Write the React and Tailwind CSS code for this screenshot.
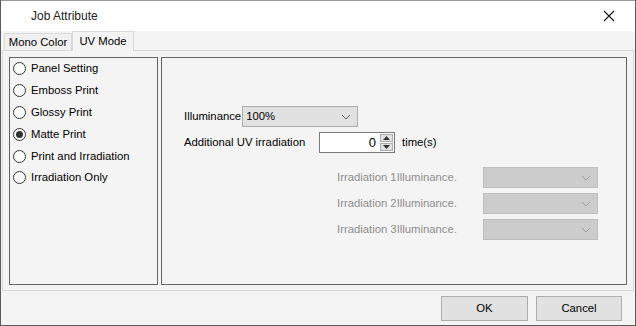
import React from 'react';

const font = { fontFamily: '"Liberation Sans", "Noto Sans CJK JP", sans-serif' };

function Radio({ label, checked }) {
  return (
    <div className="flex h-[21.8px] items-center gap-[5px] pl-[3px]">
      <span className="flex h-[13px] w-[13px] items-center justify-center rounded-full border border-[#333] bg-white">
        {checked && <span className="h-[7px] w-[7px] rounded-full bg-[#333]" />}
      </span>
      <span>{label}</span>
    </div>
  );
}

function Chevron({ color }) {
  return (
    <svg width="10" height="6" viewBox="0 0 10 6">
      <path d="M1 1 L5 5 L9 1" fill="none" stroke={color} strokeWidth="1" />
    </svg>
  );
}

function Combo({ value, disabled, className }) {
  return (
    <div
      className={`flex h-[21px] items-center justify-between border pl-[3px] pr-[6px] ${
        disabled ? 'border-[#bfbfbf] bg-[#cccccc]' : 'border-[#adadad] bg-[#e1e1e1]'
      } ${className}`}
    >
      <span>{value}</span>
      <Chevron color={disabled ? '#a0a0a0' : '#606060'} />
    </div>
  );
}

export default function App() {
  const radios = ['Panel Setting', 'Emboss Print', 'Glossy Print', 'Matte Print', 'Print and Irradiation', 'Irradiation Only'];
  return (
    <div style={font} className="flex h-[326px] w-[636px] flex-col border border-t-0 border-[#5a5a5a] bg-[#f4f4f4] text-[11.3px] text-black">
      <div className="flex h-[31px] items-center justify-between border-t border-[#9a9a9a] bg-white pl-[30px] pr-[20px]">
        <span className="text-[12px] text-[#222]">Job Attribute</span>
        <svg width="12" height="12" viewBox="0 0 12 12">
          <path d="M1 1 L11 11 M11 1 L1 11" stroke="#111" strokeWidth="1.1" />
        </svg>
      </div>
      <div className="flex h-[19px] items-end pl-[3px]">
        <div className="flex h-[17px] w-[68px] items-center justify-center border border-b-0 border-[#d9d9d9] bg-[#f0f0f0]">Mono Color</div>
        <div className="relative top-[1px] flex h-[20px] w-[62px] items-center justify-center border border-b-0 border-[#d9d9d9] bg-[#f4f4f4]">UV Mode</div>
      </div>
      <div className="mx-[1px] flex h-[241px] gap-[3px] border border-[#d9d9d9] px-[6px] pt-[6px] pb-[5px]">
        <div className="flex w-[149px] flex-col border border-[#646464]">
          {radios.map((r) => (
            <Radio key={r} label={r} checked={r === 'Matte Print'} />
          ))}
        </div>
        <div className="flex flex-1 flex-col border border-[#646464] pl-[22px] pt-[48px]">
          <div className="flex items-center gap-[1px]">
            <span>Illuminance</span>
            <Combo value="100%" className="w-[116px]" />
          </div>
          <div className="mt-[5px] flex items-center">
            <span className="w-[135px]">Additional UV irradiation</span>
            <div className="flex h-[21px] w-[76px] items-center border border-[#7a7a7a] bg-white">
              <span className="flex-1 pr-[3px] text-right text-[13px]">0</span>
              <div className="flex h-full w-[15px] flex-col gap-[1px] p-[1px]">
                <div className="flex flex-1 items-center justify-center border border-[#adadad] bg-[#e1e1e1]">
                  <svg width="7" height="4" viewBox="0 0 7 4"><path d="M0 4 L3.5 0 L7 4Z" fill="#333" /></svg>
                </div>
                <div className="flex flex-1 items-center justify-center border border-[#adadad] bg-[#e1e1e1]">
                  <svg width="7" height="4" viewBox="0 0 7 4"><path d="M0 0 L3.5 4 L7 0Z" fill="#333" /></svg>
                </div>
              </div>
            </div>
            <span className="ml-[7px]">time(s)</span>
          </div>
          <div className="mt-[14px] flex flex-col gap-[5px] pl-[153px] text-[#8d8d8d]">
            {[1, 2, 3].map((n) => (
              <div key={n} className="flex items-center">
                <span className="w-[146px]">{`Irradiation ${n}Illuminance.`}</span>
                <Combo value="" disabled className="w-[115px]" />
              </div>
            ))}
          </div>
        </div>
      </div>
      <div className="flex flex-1 items-center justify-end gap-[8px] pr-[13px] pt-[1px]">
        <button className="h-[25px] w-[87px] border border-[#adadad] bg-[#e1e1e1]">OK</button>
        <button className="h-[25px] w-[86px] border border-[#adadad] bg-[#e1e1e1]">Cancel</button>
      </div>
    </div>
  );
}
